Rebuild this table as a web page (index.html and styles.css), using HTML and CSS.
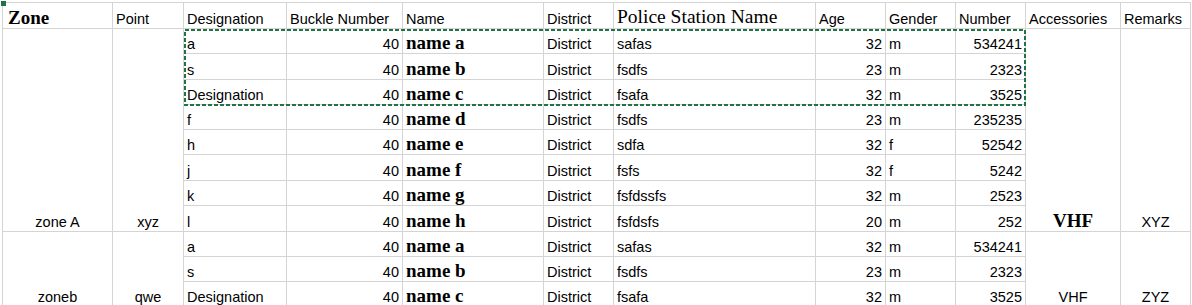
FILE: index.html
```html
<!DOCTYPE html>
<html>
<head>
<meta charset="utf-8">
<link rel="stylesheet" href="styles.css">
</head>
<body>
<div class="corner"></div>
<div class="sheet">
  <div class="c hd zone-h">Zone</div>
  <div class="c hd">Point</div>
  <div class="c hd">Designation</div>
  <div class="c hd">Buckle Number</div>
  <div class="c hd">Name</div>
  <div class="c hd">District</div>
  <div class="c hd ps-h">Police Station Name</div>
  <div class="c hd">Age</div>
  <div class="c hd">Gender</div>
  <div class="c hd">Number</div>
  <div class="c hd">Accessories</div>
  <div class="c hd">Remarks</div>

  <div class="c mid span8">zone A</div>
  <div class="c mid span8">xyz</div>
  <div class="c">a</div><div class="c num">40</div><div class="c nm">name a</div><div class="c">District</div><div class="c">safas</div><div class="c num">32</div><div class="c">m</div><div class="c num">534241</div>
  <div class="c mid span8 vhf">VHF</div>
  <div class="c mid span8">XYZ</div>

  <div class="c">s</div><div class="c num">40</div><div class="c nm">name b</div><div class="c">District</div><div class="c">fsdfs</div><div class="c num">23</div><div class="c">m</div><div class="c num">2323</div>
  <div class="c">Designation</div><div class="c num">40</div><div class="c nm">name c</div><div class="c">District</div><div class="c">fsafa</div><div class="c num">32</div><div class="c">m</div><div class="c num">3525</div>
  <div class="c">f</div><div class="c num">40</div><div class="c nm">name d</div><div class="c">District</div><div class="c">fsdfs</div><div class="c num">23</div><div class="c">m</div><div class="c num">235235</div>
  <div class="c">h</div><div class="c num">40</div><div class="c nm">name e</div><div class="c">District</div><div class="c">sdfa</div><div class="c num">32</div><div class="c">f</div><div class="c num">52542</div>
  <div class="c">j</div><div class="c num">40</div><div class="c nm">name f</div><div class="c">District</div><div class="c">fsfs</div><div class="c num">32</div><div class="c">f</div><div class="c num">5242</div>
  <div class="c">k</div><div class="c num">40</div><div class="c nm">name g</div><div class="c">District</div><div class="c">fsfdssfs</div><div class="c num">32</div><div class="c">m</div><div class="c num">2523</div>
  <div class="c">l</div><div class="c num">40</div><div class="c nm">name h</div><div class="c">District</div><div class="c">fsfdsfs</div><div class="c num">20</div><div class="c">m</div><div class="c num">252</div>

  <div class="c mid span3">zoneb</div>
  <div class="c mid span3">qwe</div>
  <div class="c">a</div><div class="c num">40</div><div class="c nm">name a</div><div class="c">District</div><div class="c">safas</div><div class="c num">32</div><div class="c">m</div><div class="c num">534241</div>
  <div class="c mid span3">VHF</div>
  <div class="c mid span3">ZYZ</div>
  <div class="c">s</div><div class="c num">40</div><div class="c nm">name b</div><div class="c">District</div><div class="c">fsdfs</div><div class="c num">23</div><div class="c">m</div><div class="c num">2323</div>
  <div class="c">Designation</div><div class="c num">40</div><div class="c nm">name c</div><div class="c">District</div><div class="c">fsafa</div><div class="c num">32</div><div class="c">m</div><div class="c num">3525</div>
</div>
<svg class="selection" width="842" height="77" viewBox="0 0 842 77">
  <rect x="1" y="1" width="840" height="75" fill="none" stroke="#217346" stroke-width="2" stroke-dasharray="4 2"/>
</svg>
</body>
</html>
```

FILE: styles.css
```css
html, body {
  margin: 0;
  padding: 0;
  background: #ffffff;
  overflow: hidden;
}

body {
  width: 1192px;
  height: 305px;
  font-family: "Liberation Sans", Arial, sans-serif;
  font-size: 14.5px;
  color: #000;
}

.sheet {
  margin: 2px 0 0 2px;
  display: grid;
  grid-template-columns: 110px 71px 103px 116px 141px 70px 202px 70px 70px 70px 95px 70px;
  grid-template-rows: 26px 25px 26px 25px 25px 25px 26px 25px 26px 25px 25px 25px;
  border-left: 1px solid #d4d4d4;
  border-top: 1px solid #d4d4d4;
  width: max-content;
}

.c {
  box-sizing: border-box;
  border-right: 1px solid #d4d4d4;
  border-bottom: 1px solid #d4d4d4;
  display: flex;
  align-items: flex-end;
  padding: 0 3px 1px 3px;
  line-height: 16px;
  white-space: nowrap;
  overflow: hidden;
}

.num {
  justify-content: flex-end;
}

.mid {
  justify-content: center;
}

.span8 {
  grid-row: span 8;
}

.span3 {
  grid-row: span 3;
}

.nm,
.zone-h,
.vhf {
  font-family: "Liberation Serif", "Times New Roman", serif;
  font-weight: bold;
  font-size: 19px;
  padding-bottom: 2px;
}

.zone-h {
  padding-left: 5px;
}

.ps-h {
  font-family: "Liberation Serif", "Times New Roman", serif;
  font-size: 19.5px;
  padding-bottom: 3px;
}

.corner {
  position: absolute;
  left: 1px;
  top: 1px;
  width: 5px;
  height: 5px;
  background: #217346;
}

.selection {
  position: absolute;
  left: 184px;
  top: 29px;
}
```
